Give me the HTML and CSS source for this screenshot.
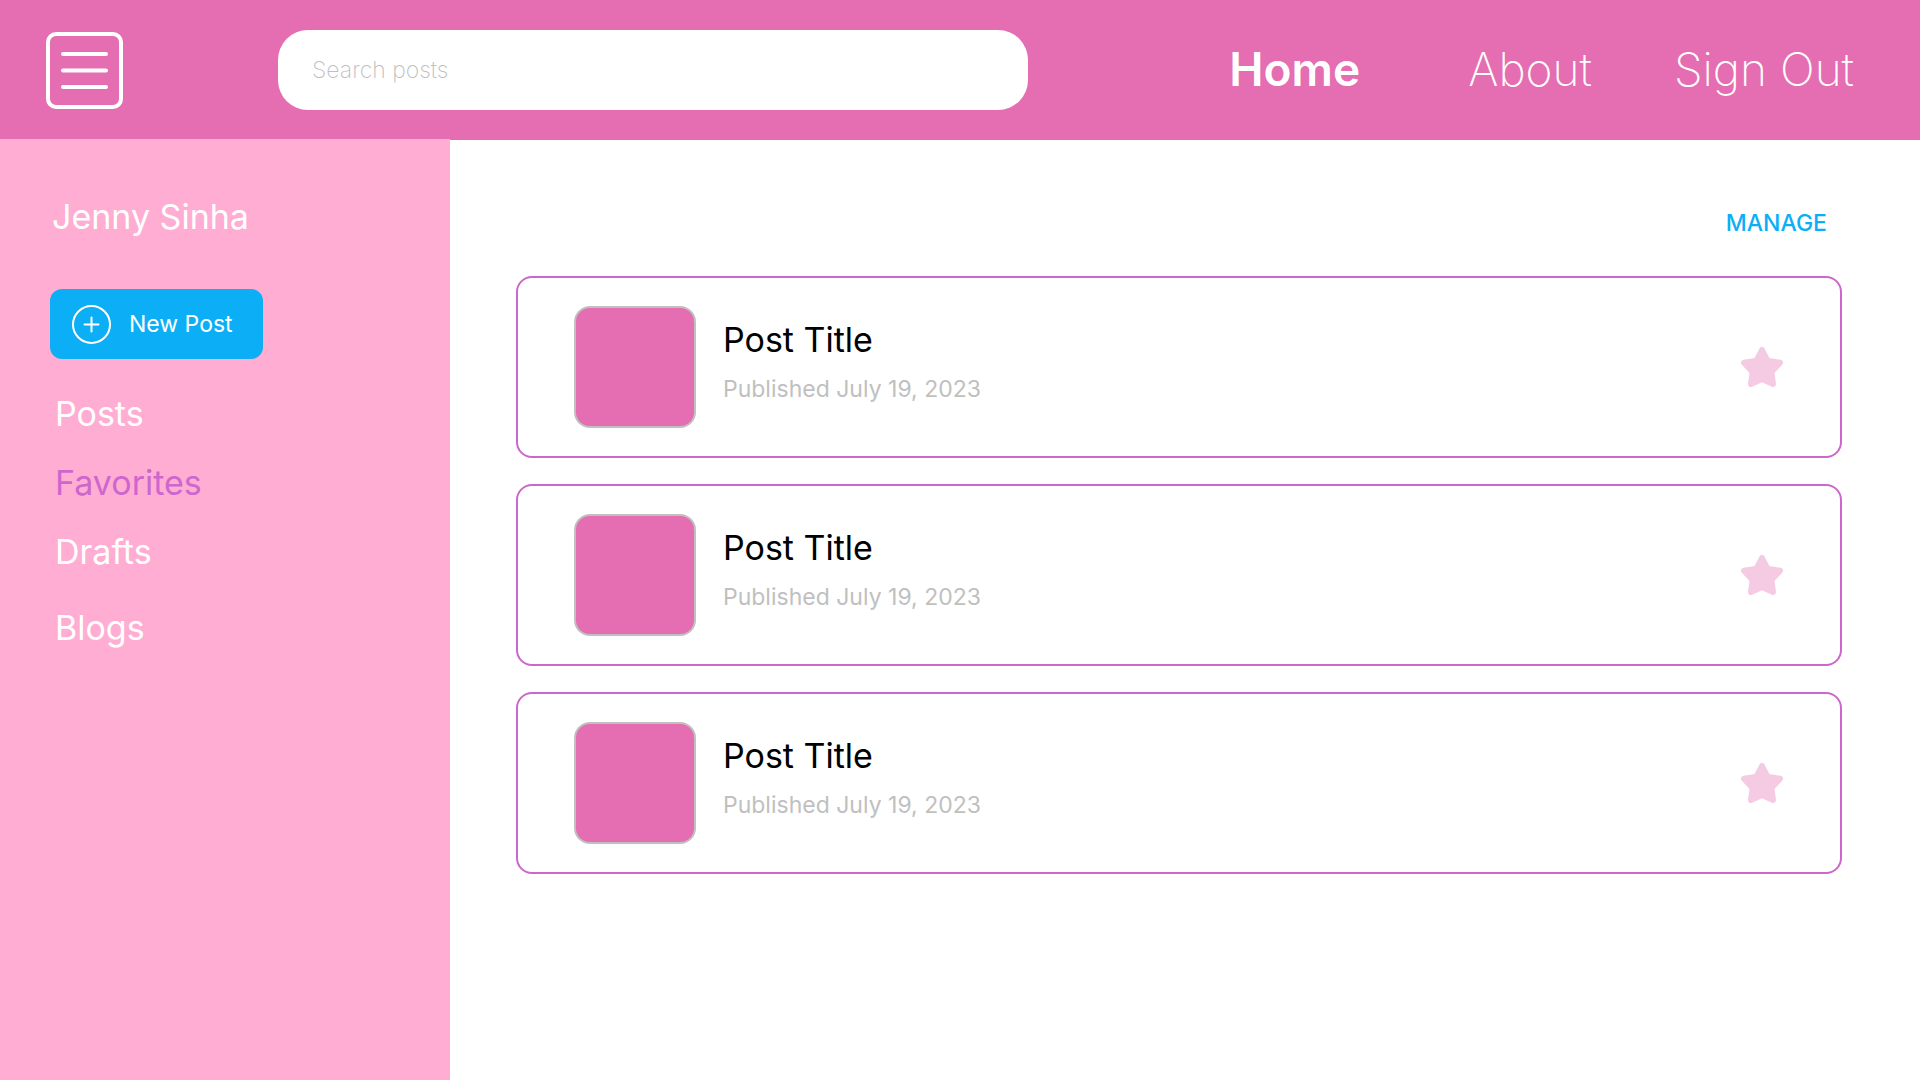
FILE: index.html
```html
<!DOCTYPE html>
<html lang="en">
<head>
<meta charset="utf-8">
<title>Favorites</title>
<link rel="stylesheet" href="styles.css">
</head>
<body>
<header class="topbar">
  <button class="menu" type="button" aria-label="Menu">
    <svg viewBox="0 0 77 77" fill="none" stroke="#fff" stroke-width="4" stroke-linecap="round">
      <rect x="2" y="2" width="73" height="73" rx="8"/>
      <path d="M17 22H60M17 38.5H60M17 55H60"/>
    </svg>
  </button>
  <input class="search" type="search" placeholder="Search posts" aria-label="Search posts">
  <nav class="nav">
    <a class="nav-link nav-current" href="#">Home</a>
    <a class="nav-link" href="#">About</a>
    <a class="nav-link" href="#">Sign Out</a>
  </nav>
</header>
<div class="layout">
  <aside class="sidebar">
    <p class="user">Jenny Sinha</p>
    <button class="new-post" type="button">
      <svg class="plus" viewBox="0 0 40 40" fill="none" stroke="#fff" stroke-width="2" stroke-linecap="round">
        <circle cx="20.500" cy="20.500" r="18.500"/>
        <path d="M13.500 20.500H27.500M20.500 13.500V27.500"/>
      </svg>
      New Post
    </button>
    <nav class="side-nav">
      <a class="side-link" href="#">Posts</a>
      <a class="side-link side-current" href="#">Favorites</a>
      <a class="side-link" href="#">Drafts</a>
      <a class="side-link side-last" href="#">Blogs</a>
    </nav>
  </aside>
  <main class="content">
    <button class="manage" type="button">MANAGE</button>
    <article class="card">
      <div class="thumb"></div>
      <div class="info"><h2 class="title">Post Title</h2><p class="date">Published July 19, 2023</p></div>
      <button class="star" type="button" aria-label="Favorite"><svg viewBox="0 0 42 40" fill="#f5cbe4" stroke="#f5cbe4" stroke-width="6" stroke-linejoin="round"><path d="M21 3L26.400 13.700L39 15.700L30.400 25L32 37L21 32L10 37L11.600 25L3 15.700L15.600 13.700Z"/></svg></button>
    </article>
    <article class="card">
      <div class="thumb"></div>
      <div class="info"><h2 class="title">Post Title</h2><p class="date">Published July 19, 2023</p></div>
      <button class="star" type="button" aria-label="Favorite"><svg viewBox="0 0 42 40" fill="#f5cbe4" stroke="#f5cbe4" stroke-width="6" stroke-linejoin="round"><path d="M21 3L26.400 13.700L39 15.700L30.400 25L32 37L21 32L10 37L11.600 25L3 15.700L15.600 13.700Z"/></svg></button>
    </article>
    <article class="card">
      <div class="thumb"></div>
      <div class="info"><h2 class="title">Post Title</h2><p class="date">Published July 19, 2023</p></div>
      <button class="star" type="button" aria-label="Favorite"><svg viewBox="0 0 42 40" fill="#f5cbe4" stroke="#f5cbe4" stroke-width="6" stroke-linejoin="round"><path d="M21 3L26.400 13.700L39 15.700L30.400 25L32 37L21 32L10 37L11.600 25L3 15.700L15.600 13.700Z"/></svg></button>
    </article>
  </main>
</div>
</body>
</html>
```
FILE: styles.css
```css
* { box-sizing: border-box; }
body {
  margin: 0;
  min-height: 100vh;
  display: flex;
  flex-direction: column;
  background: #fff;
  font-family: Inter, "Noto Sans", sans-serif;
  color: #000;
}
button { border: 0; padding: 0; background: none; font: inherit; cursor: pointer; }
a { text-decoration: none; color: inherit; }
svg { display: block; width: 100%; height: 100%; }

.topbar {
  display: flex;
  align-items: center;
  height: 140px;
  padding: 0 66px 0 46px;
  background: #e56db1;
}
.menu { width: 77px; height: 77px; margin-right: 155px; flex: none; }
.search {
  flex: 0 1 750px;
  min-width: 0;
  height: 80px;
  padding: 0 34px;
  border: 0;
  border-radius: 30px;
  background: #fff;
  font-family: inherit;
  font-size: 23px;
  font-weight: 200;
}
.search::placeholder { color: #c0c0c0; opacity: 1; }
.nav { display: flex; gap: 82px; margin-left: auto; padding-bottom: 2px; color: #fff; }
.nav-link { font-size: 46px; line-height: 60px; font-weight: 200; white-space: nowrap; }
.nav-current { margin-right: 26px; font-weight: 600; }

.layout { flex: 1; display: flex; }
.sidebar {
  flex: none;
  width: 450px;
  margin-top: -1px;
  padding: 56px 50px;
  background: #ffadd2;
  color: #fff;
}
.user { margin: 0 0 50px; padding-left: 2px; font-size: 34px; line-height: 44px; }
.new-post {
  display: flex;
  align-items: center;
  gap: 18px;
  height: 70px;
  padding: 0 30px 0 21px;
  border-radius: 12px;
  background: #0caff5;
  color: #fff;
  font-size: 23px;
}
.plus { width: 40px; height: 40px; }
.side-nav { display: flex; flex-direction: column; gap: 25px; padding: 33px 5px; }
.side-link { font-size: 34px; line-height: 44px; }
.side-current { color: #cd67cd; }
.side-last { margin-top: 7px; }

.content {
  flex: 1;
  display: flex;
  flex-direction: column;
  gap: 26px;
  padding: 68px 78px 68px 66px;
}
.manage {
  align-self: flex-end;
  margin: 0 15px 12px 0;
  font-size: 23px;
  line-height: 30px;
  font-weight: 500;
  color: #0caff5;
}
.card {
  display: flex;
  align-items: center;
  padding: 28px 57px 28px 56px;
  border: 2px solid #cd67cd;
  border-radius: 16px;
}
.thumb {
  width: 122px;
  height: 122px;
  border: 2px solid #c0c0c0;
  border-radius: 16px;
  background: #e56db1;
}
.info { flex: 1; padding: 0 0 12px 27px; }
.title { margin: 0 0 12px; font-size: 34px; line-height: 44px; font-weight: 400; }
.date { margin: 0; font-size: 23px; line-height: 30px; color: #c0c0c0; }
.star { width: 42px; height: 40px; }
```
